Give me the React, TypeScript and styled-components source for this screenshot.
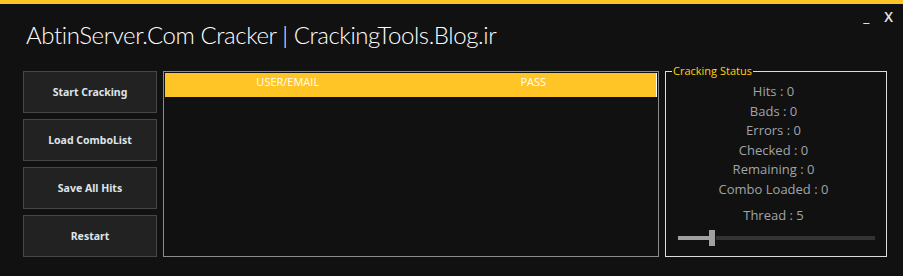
import React from "react";
import styled, { createGlobalStyle } from "styled-components";

const Global = createGlobalStyle`
  html, body { margin: 0; padding: 0; background: #111111; }
  body { font-family: "Open Sans", "Noto Sans", sans-serif; }
`;

const Window = styled.div`
  width: 903px;
  height: 276px;
  background: #111111;
  display: flex;
  flex-direction: column;
  overflow: hidden;
`;

const AccentBar = styled.div`
  height: 4px;
  background: #fec526;
  flex: none;
`;

const Header = styled.div`
  display: flex;
  align-items: flex-start;
  justify-content: space-between;
  height: 67px;
  flex: none;
`;

const Title = styled.h1`
  margin: 0;
  padding: 16px 0 0 26px;
  font-family: "Lato", "Open Sans", sans-serif;
  font-weight: 300;
  font-size: 24px;
  line-height: 30px;
  color: #ffffff;
  letter-spacing: -0.4px;
  white-space: nowrap;
`;

const Controls = styled.div`
  display: flex;
  gap: 15px;
  padding: 3px 10px 0 0;
  font-family: "Open Sans", sans-serif;
  font-size: 14px;
  line-height: 20px;
  color: #e6e6e6;
`;

const Control = styled.span<{ $bold?: boolean }>`
  font-weight: ${(p) => (p.$bold ? 600 : 400)};
`;

const Main = styled.div`
  display: flex;
  gap: 6px;
  padding-left: 23px;
  height: 186px;
`;

const ButtonColumn = styled.div`
  width: 134px;
  display: flex;
  flex-direction: column;
  justify-content: space-between;
`;

const ActionButton = styled.button`
  height: 42px;
  box-sizing: border-box;
  background: #222222;
  border: 1px solid #464646;
  color: #dfe4ea;
  font-family: "Noto Sans", "Open Sans", sans-serif;
  font-weight: 700;
  font-size: 10.5px;
  padding: 0;
  cursor: pointer;
`;

const Table = styled.div`
  width: 496px;
  box-sizing: border-box;
  border: 1px solid #8c8c8c;
  padding: 1px;
  display: flex;
  flex-direction: column;
`;

const TableHead = styled.div`
  height: 24px;
  background: #ffc526;
  border-right: 1px solid #ffffff;
  display: grid;
  grid-template-columns: 1fr 1fr;
`;

const HeadCell = styled.div`
  text-align: center;
  color: #ffffff;
  font-family: "Open Sans", sans-serif;
  font-size: 11px;
  line-height: 15px;
  padding-top: 1px;
`;

const Group = styled.div`
  position: relative;
  width: 222px;
  box-sizing: border-box;
  border: 1px solid #dcdcdc;
  height: 186px;
  display: flex;
  flex-direction: column;
  align-items: center;
  padding-top: 10px;
`;

const Legend = styled.span`
  position: absolute;
  top: -9px;
  left: 6px;
  padding: 0 1px;
  background: #111111;
  color: #ffd20a;
  font-family: "Open Sans", sans-serif;
  font-size: 11px;
  line-height: 16px;
`;

const Stat = styled.div<{ $gapTop?: number }>`
  font-family: "Open Sans", sans-serif;
  font-size: 13px;
  line-height: 19.5px;
  color: #a0a4a8;
  margin-top: ${(p) => p.$gapTop ?? 0}px;
  margin-left: -5px;
`;

const SliderRow = styled.div`
  margin-top: 4px;
  width: 197px;
  height: 16px;
  display: flex;
  align-items: center;
`;

const TrackFill = styled.div`
  height: 4px;
  background: #a0a0a0;
`;

const Thumb = styled.div`
  width: 6px;
  height: 16px;
  background: #a0a0a0;
  flex: none;
`;

const TrackRest = styled.div`
  height: 4px;
  flex: 1;
  margin-left: 1px;
  background: #333333;
`;

const stats = [
  "Hits : 0",
  "Bads : 0",
  "Errors : 0",
  "Checked : 0",
  "Remaining : 0",
  "Combo Loaded : 0",
];

export default function App() {
  const fill = 31;
  return (
    <Window>
      <Global />
      <AccentBar />
      <Header>
        <Title>AbtinServer.Com Cracker | CrackingTools.Blog.ir</Title>
        <Controls>
          <Control>_</Control>
          <Control $bold>X</Control>
        </Controls>
      </Header>
      <Main>
        <ButtonColumn>
          <ActionButton>Start Cracking</ActionButton>
          <ActionButton>Load ComboList</ActionButton>
          <ActionButton>Save All Hits</ActionButton>
          <ActionButton>Restart</ActionButton>
        </ButtonColumn>
        <Table>
          <TableHead>
            <HeadCell>USER/EMAIL</HeadCell>
            <HeadCell>PASS</HeadCell>
          </TableHead>
        </Table>
        <Group>
          <Legend>Cracking Status</Legend>
          {stats.map((s) => (
            <Stat key={s}>{s}</Stat>
          ))}
          <Stat $gapTop={7}>Thread : 5</Stat>
          <SliderRow>
            <TrackFill style={{ width: fill }} />
            <Thumb />
            <TrackRest />
          </SliderRow>
        </Group>
      </Main>
    </Window>
  );
}
